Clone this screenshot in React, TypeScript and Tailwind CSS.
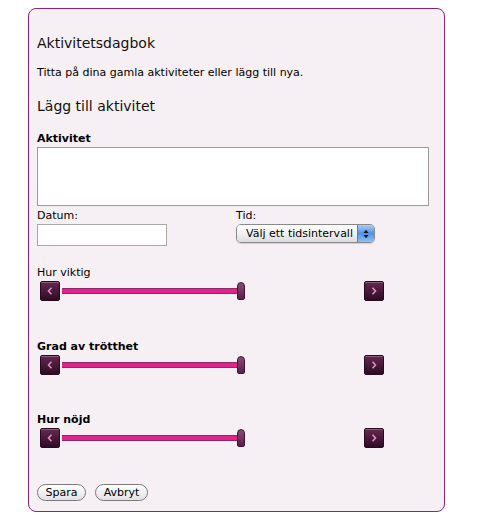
import React from "react";

const font = { fontFamily: '"DejaVu Sans", Verdana, sans-serif' };

function ArrowButton({ dir }: { dir: "left" | "right" }) {
  return (
    <div className="w-[20px] h-[20px] rounded-[2px] bg-gradient-to-b from-[#66284f] to-[#2e0c25] border border-[#260a1f] shadow-[inset_0_1px_0_rgba(255,255,255,0.25)] flex items-center justify-center">
      <svg width="6" height="8" viewBox="0 0 6 8">
        {dir === "left" ? (
          <path d="M4.5 0.8 L1.5 4 L4.5 7.2" stroke="#db8fc2" strokeWidth="1.6" fill="none" />
        ) : (
          <path d="M1.5 0.8 L4.5 4 L1.5 7.2" stroke="#db8fc2" strokeWidth="1.6" fill="none" />
        )}
      </svg>
    </div>
  );
}

function Slider() {
  return (
    <div className="flex items-center ml-[3px] w-[344px] h-[20px]">
      <ArrowButton dir="left" />
      <div className="relative flex-1 h-[20px] mx-[2px]">
        <div className="absolute left-0 top-[7px] w-[178px] h-[6px] bg-[#e3238d] border-y border-[#8c2a63]" />
        <div className="absolute left-[175px] top-[1px] w-[8px] h-[18px] rounded-t-[4px] rounded-b-[2px] bg-gradient-to-b from-[#8a4a78] to-[#5a2149] border border-[#3e1433]" />
      </div>
      <ArrowButton dir="right" />
    </div>
  );
}

export default function App() {
  return (
    <div className="bg-white min-h-[524px] pt-[8px] pl-[28px]" style={font}>
      <div className="w-[417px] h-[504px] border border-[#8b2376] rounded-[8px] bg-[#f6f0f4] pl-[8px] pt-[26px] text-black">
        <h1 className="text-[14px] leading-[17px] text-[#111]">Aktivitetsdagbok</h1>
        <p className="mt-[14px] text-[11px] leading-[14px]">
          Titta på dina gamla aktiviteter eller lägg till nya.
        </p>
        <h2 className="mt-[18px] text-[14px] leading-[17px] text-[#111]">Lägg till aktivitet</h2>

        <label className="block mt-[17px] text-[11px] leading-[14px] font-bold">Aktivitet</label>
        <textarea className="block mt-[1px] w-[392px] h-[59px] bg-white border border-[#9a9a9a] resize-none outline-none" />

        <div className="flex mt-[3px]">
          <div className="w-[199px]">
            <div className="text-[11px] leading-[14px]">Datum:</div>
            <input className="block mt-[1px] w-[130px] h-[22px] bg-white border border-[#a8a8a8] outline-none" />
          </div>
          <div>
            <div className="text-[11px] leading-[14px]">Tid:</div>
            <div className="mt-[1px] flex w-[139px] h-[19px] rounded-[5px] border border-[#8a8a8a] overflow-hidden shadow-[0_1px_1px_rgba(0,0,0,0.15)]">
              <div className="flex-1 bg-gradient-to-b from-white via-[#f1f1f1] to-[#dcdcdc] text-[11px] leading-[17px] pl-[9px]">
                Välj ett tidsintervall
              </div>
              <div className="w-[17px] bg-gradient-to-b from-[#a9cdf5] via-[#4f93e6] to-[#8fc0f3] border-l border-[#5a7fae] flex items-center justify-center">
                <svg width="6" height="10" viewBox="0 0 6 10">
                  <path d="M0.5 4 L3 0.8 L5.5 4 Z" fill="#111" />
                  <path d="M0.5 6 L3 9.2 L5.5 6 Z" fill="#111" />
                </svg>
              </div>
            </div>
          </div>
        </div>

        <div className="mt-[20px] text-[11px] leading-[14px]">Hur viktig</div>
        <div className="mt-[1px]">
          <Slider />
        </div>

        <div className="mt-[39px] text-[11px] leading-[14px] font-bold">Grad av trötthet</div>
        <div className="mt-[1px]">
          <Slider />
        </div>

        <div className="mt-[38px] text-[11px] leading-[14px] font-bold">Hur nöjd</div>
        <div className="mt-[1px]">
          <Slider />
        </div>

        <div className="flex gap-[9px] mt-[36px]">
          <button className="w-[49px] h-[17px] rounded-full border border-[#7a7a7a] bg-gradient-to-b from-white to-[#e2e2e2] text-[11px] leading-[15px] text-black">
            Spara
          </button>
          <button className="w-[53px] h-[17px] rounded-full border border-[#7a7a7a] bg-gradient-to-b from-white to-[#e2e2e2] text-[11px] leading-[15px] text-black">
            Avbryt
          </button>
        </div>
      </div>
    </div>
  );
}
